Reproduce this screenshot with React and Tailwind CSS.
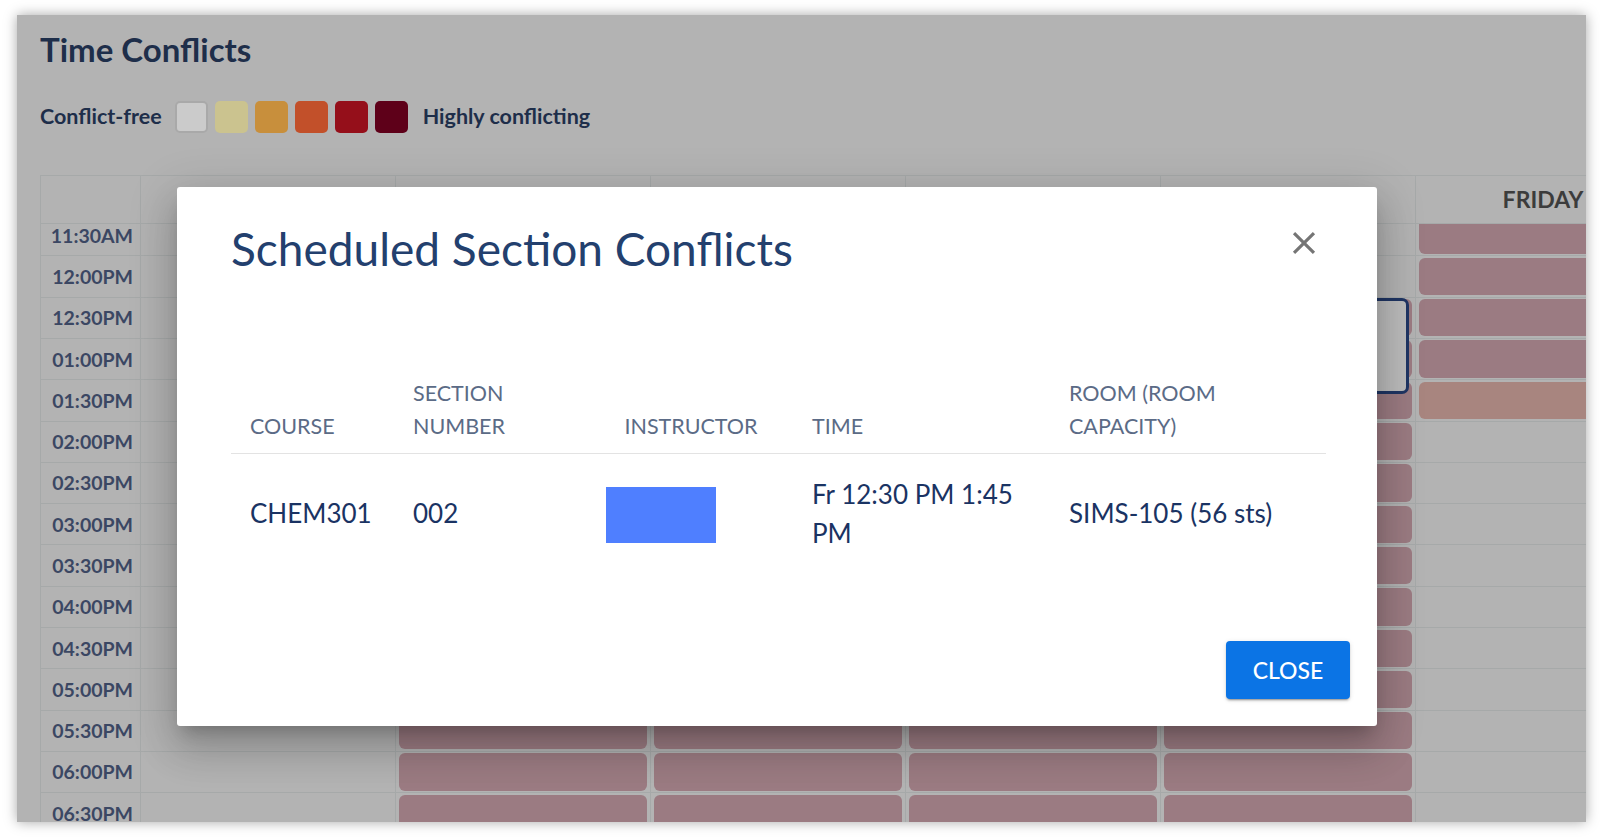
import React from 'react';

const days = ['SUNDAY', 'MONDAY', 'TUESDAY', 'WEDNESDAY', 'THURSDAY', 'FRIDAY', 'SATURDAY'];
const times = [
  '11:30AM', '12:00PM', '12:30PM', '01:00PM', '01:30PM', '02:00PM', '02:30PM', '03:00PM',
  '03:30PM', '04:00PM', '04:30PM', '05:00PM', '05:30PM', '06:00PM', '06:30PM', '07:00PM',
];

// 0 = free, 1 = conflicting, 2 = lightly conflicting
function slotLevel(day, row) {
  if (day === 0 || day === 6) return 0;
  if (day === 4) return row < 2 ? 0 : 1;
  if (day === 5) return row < 4 ? 1 : row === 4 ? 2 : 0;
  return 1;
}

const swatches = ['bg-[#cbcbcb] border-2 border-[#a9a9a9]', 'bg-[#cbc38f]', 'bg-[#c88f3c]', 'bg-[#c2502a]', 'bg-[#950f1a]', 'bg-[#5e0019]'];

function Legend() {
  return (
    <div className="flex items-center h-[32px] mt-[31px] text-[21.5px] font-bold text-[#1e2e4a]">
      <span>Conflict-free</span>
      <div className="flex gap-[7px] ml-[13px] mr-[15px]">
        {swatches.map((s, i) => (
          <div key={i} className={`w-[33px] h-[32px] rounded-[5px] ${s}`} />
        ))}
      </div>
      <span>Highly conflicting</span>
    </div>
  );
}

function Schedule() {
  return (
    <div className="mt-[42.5px] w-max border-t border-l border-[#a6a9a9]">
      <div className="flex h-[48px] border-b border-[#a6a9a9]">
        <div className="w-[100px] shrink-0 border-r border-[#a6a9a9]" />
        {days.map(d => (
          <div key={d} className="w-[255px] shrink-0 border-r border-[#a6a9a9] flex items-center justify-center text-[23px] font-bold text-[#3c3c3c]">
            {d}
          </div>
        ))}
      </div>
      <div className="overflow-hidden">
        <div className="relative -mt-[9px]">
          {times.map((t, row) => (
            <div key={t} className="flex h-[41.3px] border-b border-[#a6a9a9]">
              <div className="w-[100px] shrink-0 border-r border-[#a6a9a9] flex items-center justify-end pr-[7px] text-[19.5px] font-bold text-[#3b4763]">
                {t}
              </div>
              {days.map((d, day) => {
                const level = slotLevel(day, row);
                return (
                  <div key={d} className="w-[255px] shrink-0 border-r border-[#a6a9a9] px-[3px] py-[1.5px]">
                    {level === 1 && <div className="h-full rounded-[6px] bg-[#9b7b82]" />}
                    {level === 2 && <div className="h-full rounded-[6px] bg-[#a8857f]" />}
                  </div>
                );
              })}
            </div>
          ))}
          {/* selected section */}
          <div className="absolute top-[83px] left-[1123px] w-[245px] h-[96px] rounded-[7px] border-[3px] border-[#1f3563] bg-[#bcbcbc]" />
        </div>
      </div>
    </div>
  );
}

function ConflictsModal() {
  return (
    <div className="absolute left-[160px] top-[172px] w-[1200px] h-[539px] bg-white rounded-[3px] flex flex-col shadow-[0_11px_15px_-7px_rgba(0,0,0,0.2),0_24px_38px_3px_rgba(0,0,0,0.14),0_9px_46px_8px_rgba(0,0,0,0.12)]">
      <h2 className="pt-[34px] pl-[54px] text-[46px] leading-[1.2] font-normal text-[#23406e]">
        Scheduled Section Conflicts
      </h2>
      <button className="absolute left-[1108px] top-[37px] w-[38px] h-[38px]">
        <svg viewBox="0 0 24 24" className="w-full h-full fill-[#757575]">
          <path d="M19 6.41 17.59 5 12 10.59 6.41 5 5 6.41 10.59 12 5 17.59 6.41 19 12 13.41 17.59 19 19 17.59 13.41 12z" />
        </svg>
      </button>

      <div className="ml-[54px] w-[1095px] mt-[101px]">
        <div className="grid grid-cols-[163px_211.5px_187.5px_257px_1fr] items-end pb-[11px] border-b border-[#e3e3e3] text-[21.5px] leading-[32.5px] uppercase text-[#5b6b86]">
          <div className="pl-[19px]">Course</div>
          <div className="pl-[19px]">Section<br />Number</div>
          <div className="pl-[19px]">Instructor</div>
          <div className="pl-[19px]">Time</div>
          <div className="pl-[19px]">Room (Room<br />Capacity)</div>
        </div>
        <div className="grid grid-cols-[163px_211.5px_187.5px_257px_1fr] items-center pt-[20.5px] text-[26px] leading-[39px] text-[#1a3363]">
          <div className="pl-[19px]">CHEM301</div>
          <div className="pl-[19px]">002</div>
          <div>
            <div className="w-[110px] h-[56px] mt-[3px] bg-[#4f7fff]" />
          </div>
          <div className="pl-[19px] max-w-[235px]">Fr 12:30 PM 1:45 PM</div>
          <div className="pl-[19px]">SIMS-105 (56 sts)</div>
        </div>
      </div>

      <div className="mt-auto flex justify-end pr-[27px] pb-[27px]">
        <button className="w-[124px] h-[58px] rounded-[4px] bg-[#0b74e5] text-white text-[23px] font-medium uppercase shadow-[0_3px_1px_-2px_rgba(0,0,0,0.2),0_2px_2px_0_rgba(0,0,0,0.14),0_1px_5px_0_rgba(0,0,0,0.12)]">
          Close
        </button>
      </div>
    </div>
  );
}

export default function App() {
  return (
    <div className="w-[1600px] h-[840px] bg-white pt-[15px] pl-[17px] font-['Lato','Liberation_Sans',sans-serif]">
      <div className="relative w-[1569px] h-[807px] bg-[#b3b3b3] overflow-hidden px-[23px] pt-[15px] shadow-[0_0_12px_rgba(0,0,0,0.35)]">
        <h1 className="text-[33px] leading-[1.2] font-bold text-[#1e2e4a]">Time Conflicts</h1>
        <Legend />
        <Schedule />
        <ConflictsModal />
      </div>
    </div>
  );
}
